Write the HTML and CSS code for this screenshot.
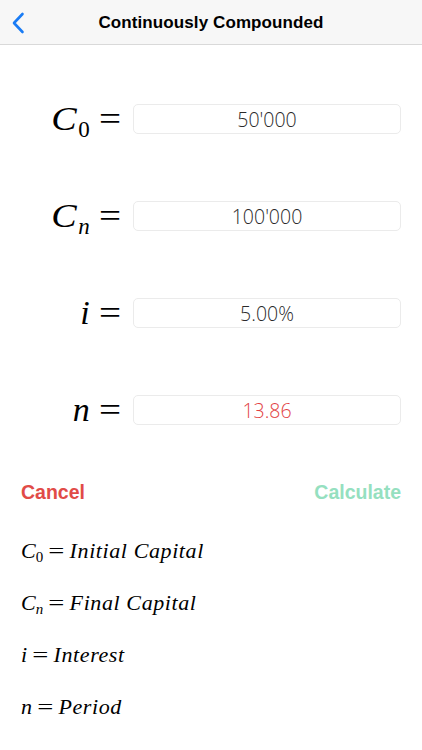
FILE: index.html
```html
<!DOCTYPE html>
<html>
<head>
<meta charset="utf-8">
<link rel="stylesheet" href="styles.css">
</head>
<body>
<div class="nav">
  <svg class="back" width="14" height="22" viewBox="0 0 14 22"><path d="M11.5 2 L3 11 L11.5 20" fill="none" stroke="#1a7cf5" stroke-width="2.6" stroke-linecap="round" stroke-linejoin="round"/></svg>
  <div class="title">Continuously Compounded</div>
</div>
<div class="form">
  <div class="row">
    <div class="label"><span class="var wide">C</span><sub>0</sub><span class="eq">=</span></div>
    <div class="box">50'000</div>
  </div>
  <div class="row">
    <div class="label"><span class="var wide">C</span><sub class="it">n</sub><span class="eq">=</span></div>
    <div class="box">100'000</div>
  </div>
  <div class="row">
    <div class="label"><span class="var">i</span><span class="eq">=</span></div>
    <div class="box">5.00%</div>
  </div>
  <div class="row">
    <div class="label"><span class="var">n</span><span class="eq">=</span></div>
    <div class="box result">13.86</div>
  </div>
</div>
<div class="actions">
  <span class="cancel">Cancel</span>
  <span class="calc">Calculate</span>
</div>
<div class="legend">
  <div class="line"><span class="var">C</span><sub>0</sub><span class="eq">=</span><span class="var txt">Initial Capital</span></div>
  <div class="line"><span class="var">C</span><sub class="it">n</sub><span class="eq">=</span><span class="var txt">Final Capital</span></div>
  <div class="line"><span class="var">i</span><span class="eq">=</span><span class="var txt">Interest</span></div>
  <div class="line"><span class="var">n</span><span class="eq">=</span><span class="var txt">Period</span></div>
</div>
</body>
</html>
```

FILE: styles.css
```css
* { box-sizing: border-box; }
html, body { margin: 0; padding: 0; background: #fff; }
body { width: 422px; height: 750px; overflow: hidden; font-family: "Liberation Sans", Arial, sans-serif; }

.nav {
  position: relative;
  height: 45px;
  background: #f7f7f7;
  border-bottom: 1px solid #d9d9d9;
  display: flex;
  align-items: center;
  justify-content: center;
}
.back { position: absolute; left: 11px; top: 12px; }
.title { font-size: 17px; font-weight: bold; color: #000; letter-spacing: 0.1px; padding-top: 2px; }

.form { padding-top: 59px; display: flex; flex-direction: column; gap: 67px; }
.row { display: flex; align-items: center; height: 30px; }
.label {
  width: 121px;
  text-align: right;
  font-family: "Liberation Serif", "Times New Roman", serif;
  font-size: 34px;
  color: #000;
  white-space: nowrap;
  line-height: 30px;
}
.var { font-style: italic; }
.label .wide { display: inline-block; transform: scaleX(1.12); transform-origin: right center; }
.label sub { font-size: 23px; vertical-align: -7px; line-height: 0; margin-left: 2px; }
.it { font-style: italic; }
.label .eq { margin-left: 12px; display: inline-block; transform: scaleX(1.15); transform-origin: right center; }
.box {
  margin-left: 12px;
  width: 268px;
  height: 30px;
  border: 1px solid #ebebeb;
  border-radius: 5px;
  display: flex;
  align-items: center;
  justify-content: center;
  font-family: "Open Sans", "Liberation Sans", sans-serif;
  font-size: 19.5px;
  font-weight: 300;
  color: #2a2a2a;
}
.box.result { color: #e23f44; }

.actions {
  display: flex;
  justify-content: space-between;
  padding: 0 21px;
  margin-top: 56px;
  font-size: 19.5px;
  font-weight: bold;
  line-height: 22px;
}
.cancel { color: #e14b47; }
.calc { color: #95e0c0; }

.legend {
  padding: 0 0 0 21px;
  margin-top: 35px;
  font-family: "Liberation Serif", "Times New Roman", serif;
  font-size: 22px;
  color: #000;
}
.line { height: 52px; line-height: 26px; white-space: nowrap; }
.legend sub { font-size: 15px; vertical-align: -4px; line-height: 0; }
.legend .eq { margin: 0 5px 0 5px; display: inline-block; transform: scaleX(1.3); padding: 0 2px; }
.legend .txt { letter-spacing: 0.6px; }
```
